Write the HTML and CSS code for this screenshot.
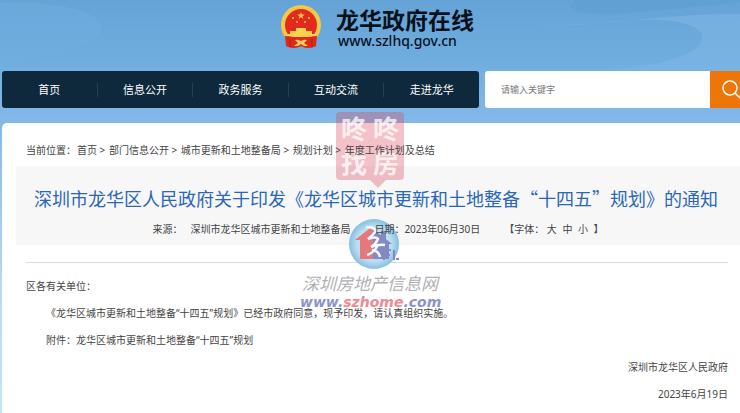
FILE: index.html
```html
<!DOCTYPE html>
<html lang="zh-CN">
<head>
  <meta charset="UTF-8">
  <meta name="viewport" content="width=device-width, initial-scale=1.0">
  <title>龙华政府在线</title>
  <link rel="stylesheet" href="styles.css">
</head>
<body>
  <svg class="backdrop" viewBox="0 0 740 123" preserveAspectRatio="none" aria-hidden="true">
    <path d="M0 3C50 0 102 10 102 28C102 45 50 58 0 62Z" fill="#74afe0" opacity=".4"/>
    <path d="M575 0C560 12 590 16 640 12C690 8 715 4 740 3V0Z" fill="#5e9ed0" opacity=".6"/>
    <path d="M535 25C590 28 610 18 660 20C695 22 708 32 700 44C688 60 640 68 600 71H740V14C650 14 620 26 535 25Z" fill="#7db5e4" opacity=".6"/>
  </svg>

  <header class="header">
    <svg class="emblem" viewBox="0 0 42 44" aria-hidden="true">
      <path d="M6 29H36V41Q28 45 21 41Q14 45 6 41Z" fill="#dc2a1d"/>
      <circle cx="21" cy="20" r="20" fill="#f5c945"/>
      <circle cx="21" cy="20" r="16" fill="#e42a1f"/>
      <path d="M21 7l1 2.500h2.700l-2.200 1.700.8 2.600L21 12.200l-2.300 1.600.8-2.600-2.200-1.700H20z" fill="#f9d34f"/>
      <g fill="#f9d34f">
        <circle cx="13" cy="13" r="1"/>
        <circle cx="29" cy="13" r="1"/>
        <circle cx="17" cy="17" r="1"/>
        <circle cx="25" cy="17" r="1"/>
        <path d="M16 23h10v3h6v3h4v3H6v-3h4v-3h6z"/>
      </g>
      <path d="M5 31Q13 31 17 34Q19 36 21 34Q23 36 25 34Q29 31 37 31L36 41Q28 44 21 41Q14 44 6 41Z" fill="#dc2a1d"/>
      <path d="M15 35Q18 34 21 36Q24 34 27 35L24 38L28 41H24L21 39L18 41H14L18 38Z" fill="#f8cf56"/>
      <path d="M10 34V42M32 34V42" fill="none" stroke="#b91d16"/>
    </svg>
    <div class="brand">
      <div class="brand-name">龙华政府在线</div>
      <div class="brand-url">www.szlhq.gov.cn</div>
    </div>
  </header>

  <div class="toolbar">
    <nav class="nav">
      <a href="#">首页</a>
      <a href="#">信息公开</a>
      <a href="#">政务服务</a>
      <a href="#">互动交流</a>
      <a href="#">走进龙华</a>
    </nav>
    <form class="search">
      <input type="text" placeholder="请输入关键字" aria-label="请输入关键字">
      <button type="button" aria-label="搜索">
        <svg viewBox="0 0 20 20" aria-hidden="true">
          <circle cx="8" cy="8" r="7"/>
          <path d="M13 13L19 19"/>
        </svg>
      </button>
    </form>
  </div>

  <main class="content">
    <div class="breadcrumb">当前位置：<a href="#">首页</a> &gt; <a href="#">部门信息公开</a> &gt; <a href="#">城市更新和土地整备局</a> &gt; <a href="#">规划计划</a> &gt; <a href="#">年度工作计划及总结</a></div>

    <div class="title-box">
      <h1>深圳市龙华区人民政府关于印发《龙华区城市更新和土地整备“十四五”规划》的通知</h1>
      <div class="meta">
        <span class="source"><span>来源：</span><span>深圳市龙华区城市更新和土地整备局</span></span>
        <span>日期：2023年06月30日</span>
        <span class="font-size">【字体： <a href="#">大</a> <a href="#">中</a> <a href="#">小</a> 】</span>
      </div>
    </div>

    <article class="article">
      <p>区各有关单位：</p>
      <p class="indent">《龙华区城市更新和土地整备“十四五”规划》已经市政府同意，现予印发，请认真组织实施。</p>
      <p class="indent">附件：龙华区城市更新和土地整备“十四五”规划</p>
      <p class="sign">深圳市龙华区人民政府</p>
      <p class="sign">2023年6月19日</p>
    </article>
  </main>

  <!-- Watermarks over the page -->
  <div class="seal">
    <span>咚</span><span>咚</span>
    <span>找</span><span>房</span>
  </div>
  <div class="watermark">
    <svg viewBox="0 0 52 52" aria-hidden="true">
      <defs>
        <radialGradient id="globe">
          <stop offset="0" stop-color="#dff2fb"/>
          <stop offset=".7" stop-color="#b8def1"/>
          <stop offset="1" stop-color="#86bfe0"/>
        </radialGradient>
      </defs>
      <circle cx="26" cy="26" r="25" fill="url(#globe)"/>
      <path d="M7 22L22 10L25 12V41H12V22Z" fill="#e5777d"/>
      <path d="M25 12L33 17V13H38V21L44 26H41V41H25Z" fill="#8389c4"/>
      <path d="M18 9Q27 9 28 13Q24 18 20 21Q28 18 30 21Q28 26 23 29Q31 26 37 27M30 27Q26 35 19 37M24 32Q31 33 32 39" fill="none" stroke="#f4fafd" stroke-width="2.500"/>
      <path d="M36 42V32H43M36 37H42M46 32V42M48 41H51" fill="none" stroke="#8389c4" stroke-width="2"/>
    </svg>
    <div class="watermark-name">深圳房地产信息网</div>
    <div class="watermark-url">www.<span>szhome</span>.com</div>
  </div>
</body>
</html>
```

FILE: styles.css
```css
* {
  box-sizing: border-box;
}

body {
  position: relative;
  display: flex;
  flex-direction: column;
  min-height: 100vh;
  margin: 0;
  overflow-x: hidden;
  font-family: "Noto Sans", "Noto Sans CJK SC", sans-serif;
  font-size: 10px;
  color: #444;
  background: linear-gradient(#65a3d6, #70addf 60px, #84b9e8 123px, #bbdcf7 300px, #c5e3f8);
}

a {
  color: inherit;
  text-decoration: none;
}

/* Header */
.backdrop {
  position: absolute;
  top: 0;
  left: 0;
  z-index: -1;
  width: 100%;
  height: 123px;
}

.header {
  display: flex;
  justify-content: center;
  gap: 14px;
  height: 71px;
  padding: 5px 0 0 14px;
}

.emblem {
  width: 42px;
  height: 44px;
}

.brand {
  color: #06111c;
}

.brand-name {
  font-family: "Noto Sans CJK SC", sans-serif;
  font-size: 23px;
  font-weight: bold;
  line-height: 28px;
}

.brand-url {
  padding-left: 2px;
  font-size: 14px;
  font-weight: 500;
  line-height: 16px;
}

/* Navigation and search */
.toolbar {
  display: grid;
  grid-template-columns: 477fr 255fr;
  gap: 6px;
  padding-left: 2px;
  margin-bottom: 15px;
}

.nav {
  display: flex;
  align-items: center;
  height: 37px;
  border-radius: 3px;
  background-color: #0e293b;
}

.nav a {
  flex: 1;
  color: #fff;
  font-size: 11px;
  line-height: 14px;
  text-align: center;
}

.nav a + a {
  border-left: 1px solid #24404f;
}

.search {
  display: flex;
  height: 37px;
  border-radius: 3px 0 0 3px;
  overflow: hidden;
}

.search input {
  flex: 1;
  min-width: 0;
  padding: 0 16px;
  border: none;
  background-color: #fff;
  font: inherit;
  font-size: 9px;
}

.search input::placeholder {
  color: #777;
}

.search button {
  width: 30px;
  padding: 0 0 0 12px;
  border: none;
  background-color: #ee7608;
  overflow: hidden;
  cursor: pointer;
}

.search svg {
  display: block;
  width: 20px;
  height: 20px;
  fill: none;
  stroke: #fff;
  stroke-width: 1.5;
}

/* Content */
.content {
  flex: 1;
  margin-left: 2px;
  border-radius: 5px 0 0 0;
  background-color: #fff;
}

.breadcrumb {
  position: relative;
  z-index: 1;
  padding: 19px 24px 8px;
  line-height: 16px;
}

.breadcrumb a {
  margin-left: 1px;
}

.title-box {
  margin-left: 14px;
  padding: 20px 0 8px;
  background-color: #f7f7f8;
  text-align: center;
}

.title-box h1 {
  margin: 0;
  padding-right: 4px;
  color: #2b67b5;
  font-family: "Noto Sans CJK SC", sans-serif;
  font-size: 18px;
  font-weight: normal;
  line-height: 24px;
  white-space: nowrap;
}

.meta {
  position: relative;
  z-index: 1;
  display: flex;
  justify-content: center;
  gap: 24px;
  padding-top: 11px;
  line-height: 16px;
}

.source {
  display: flex;
  gap: 8px;
}

.font-size a {
  margin-right: 3px;
}

.article {
  margin: 17px 12px 0 24px;
  padding-top: 10px;
  border-top: 1px solid #ddd;
}

.article p {
  margin: 0;
  line-height: 27px;
}

.article .indent {
  padding-left: 20px;
}

.article .sign {
  text-align: right;
}

/* Watermarks */
.seal {
  position: absolute;
  top: 112px;
  left: 50%;
  display: grid;
  grid-template-columns: 1fr 1fr;
  width: 68px;
  height: 68px;
  margin-left: -34px;
  padding: 0 2px;
  border-radius: 4px;
  background-color: rgba(218, 65, 85, 0.32);
  color: rgba(255, 255, 255, 0.75);
  font-size: 26px;
  font-weight: bold;
  line-height: 34px;
  text-align: center;
  pointer-events: none;
}

.seal::after {
  content: "";
  position: absolute;
  top: 100%;
  left: 50%;
  border: 8px solid transparent;
  border-top-color: rgba(218, 65, 85, 0.32);
  border-bottom: none;
}

.watermark {
  position: absolute;
  top: 218px;
  left: 50%;
  width: 140px;
  margin-left: -70px;
  color: #b0b0b4;
  font-style: italic;
  text-align: center;
  white-space: nowrap;
  pointer-events: none;
}

.watermark svg {
  display: block;
  width: 52px;
  height: 52px;
  margin: 0 auto 0 48px;
}

.watermark-name {
  padding-top: 4px;
  font-size: 17px;
  line-height: 20px;
}

.watermark-url {
  color: #8b94cb;
  font-family: "DejaVu Sans", sans-serif;
  font-size: 14px;
  font-weight: bold;
  line-height: 16px;
}

.watermark-url span {
  color: #ee8a91;
}
```
